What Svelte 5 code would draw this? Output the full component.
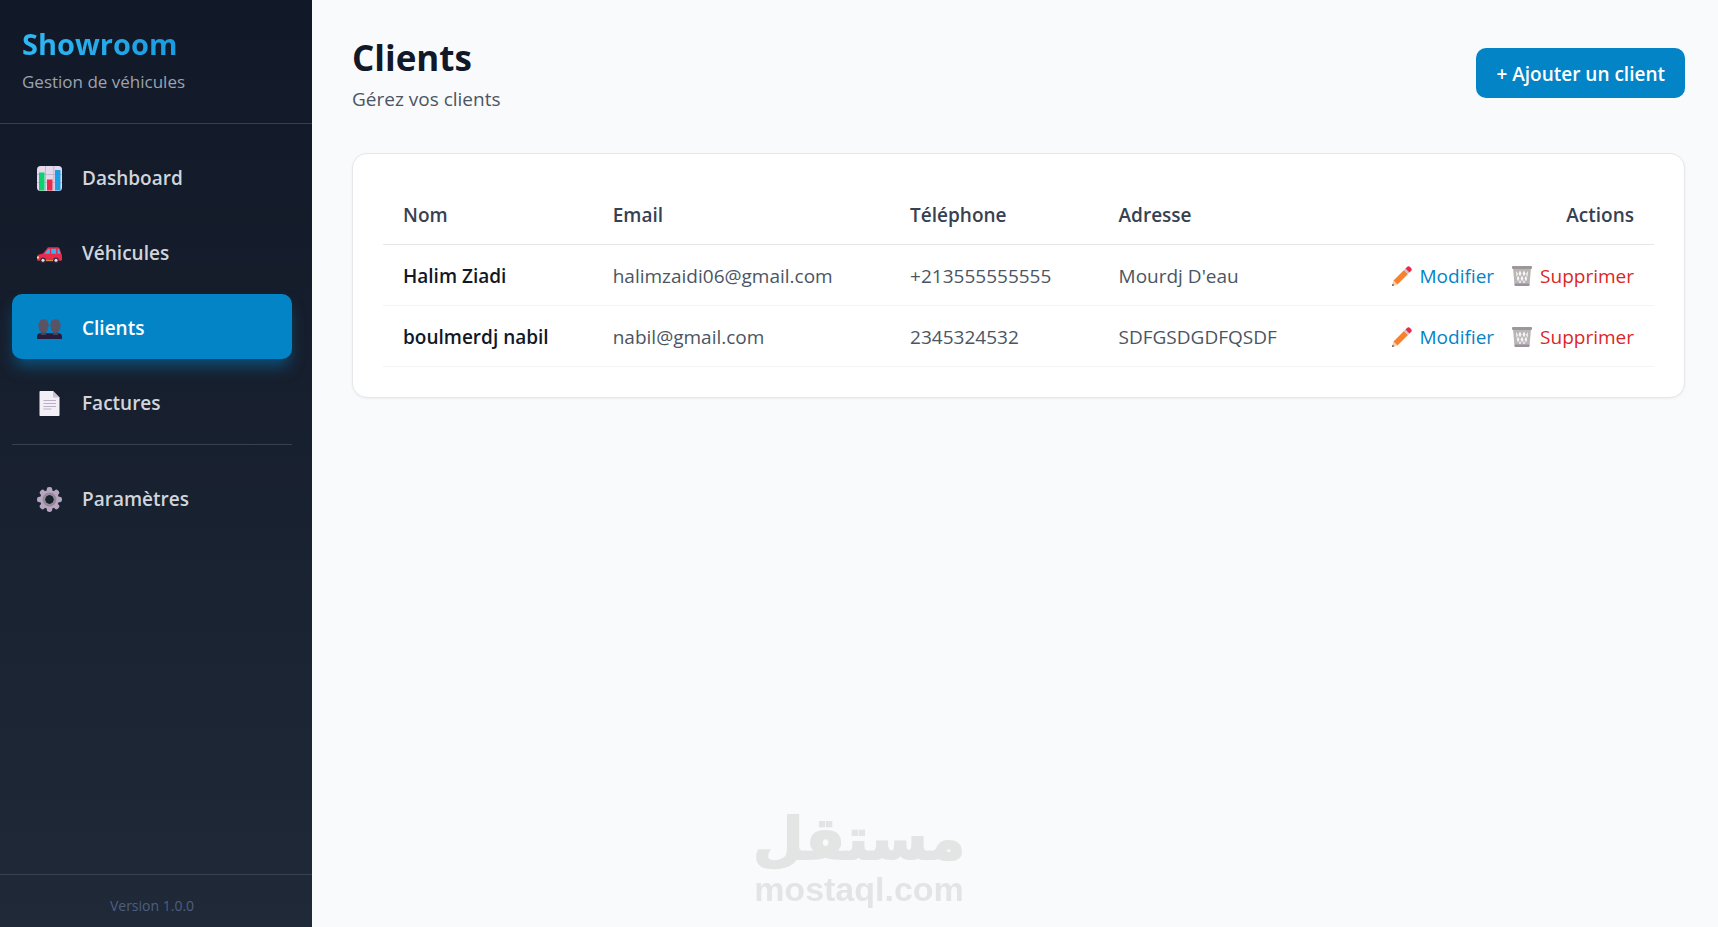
<script>
  // Liens principaux du menu
  const menu = [
    { id: 'dashboard', label: 'Dashboard' },
    { id: 'vehicules', label: 'Véhicules' },
    { id: 'clients', label: 'Clients' },
    { id: 'factures', label: 'Factures' }
  ];

  let page = $state('clients');

  let clients = $state([
    { id: 1, nom: 'Halim Ziadi', email: 'halimzaidi06@gmail.com', telephone: '+213555555555', adresse: "Mourdj D'eau" },
    { id: 2, nom: 'boulmerdj nabil', email: 'nabil@gmail.com', telephone: '2345324532', adresse: 'SDFGSDGDFQSDF' }
  ]);

  function supprimer(id) {
    clients = clients.filter((c) => c.id !== id);
  }
</script>

{#snippet icone(nom)}
  <svg class="icone" viewBox="0 0 25 25" aria-hidden="true">
    {#if nom === 'dashboard'}
      <rect width="25" height="25" rx="3.500" fill="#e4d8ea" />
      <path d="M0 8.500h25M0 16.500h25M8.500 0v25M16.800 0v25" stroke="#b9afc4" stroke-width="0.800" />
      <rect x="2" y="6.500" width="5.500" height="18" fill="#0bd16f" />
      <rect x="10" y="13.500" width="5.500" height="11" fill="#ea2a4b" />
      <rect x="18" y="4" width="5.500" height="20.500" fill="#1c9fe2" />
    {:else if nom === 'vehicules'}
      <path d="M0 16.500c0-2 1-3 3-3.300l3-.7 4-5C10.500 6.600 11 6.200 12 6.200h8.500c1 0 1.800.5 2.200 1.500l1.600 5c.5.700.7 1.300.7 2.300v3.500c0 .8-.5 1.300-1.300 1.300H1.300C.5 19.800 0 19.300 0 18.500z" fill="#ea2a4b" />
      <path d="M7.500 12.800l3.300-4.300c.4-.6.800-.8 1.500-.8h.5v5.100zM14.300 7.700h4.800v5.100h-4.800zM20.600 7.700h.4c.7 0 1 .3 1.200.9l1.300 4.200h-2.900z" fill="#35b5f0" />
      <path d="M0 15.500h2v2H0z" fill="#f7e0a0" />
      <path d="M9 19h7v1.200H9z" fill="#c98a4b" />
      <circle cx="6" cy="19.300" r="2.800" fill="#38283e" />
      <circle cx="19" cy="19.300" r="2.800" fill="#38283e" />
      <circle cx="6" cy="19.300" r="1.500" fill="#e8e0ec" />
      <circle cx="19" cy="19.300" r="1.500" fill="#e8e0ec" />
    {:else if nom === 'clients'}
      <path d="M0 23v-2.500c0-2 1.300-3.300 3.300-3.300h18.400c2 0 3.300 1.300 3.300 3.300V23z" fill="#281b3d" />
      <path d="M4 15h5v4H4zM16 15h5v4h-5z" fill="#484354" />
      <path d="M2 7.500C2 4.700 3.800 3.200 6.500 3.200s4.700 1.500 4.700 4.300l.8 2.500-.9.700c0 3.500-2 6.300-4.600 6.300S1.600 14 1.600 10.500L1 9zM23 7.500c0-2.800-1.800-4.300-4.500-4.300s-4.700 1.500-4.700 4.300L13 10l.9.700c0 3.500 2 6.300 4.600 6.300s4.900-3 4.900-6.500L24 9z" fill="#5a5363" />
    {:else if nom === 'factures'}
      <path d="M3.500 0H16l6.500 6.500V24c0 .6-.4 1-1 1h-18c-.6 0-1-.4-1-1V1c0-.6.4-1 1-1z" fill="#f3eff6" />
      <path d="M16 0v5.500c0 .6.400 1 1 1h5.500z" fill="#cdbfd6" />
      <path d="M6.500 9.500h12.500M6.500 12.500h12.500M6.500 15.500h12.500M6.500 18h8" stroke="#bcaec6" />
    {:else}
      <g fill="#b8a5c2">
        {#each [0, 45, 90, 135, 180, 225, 270, 315] as angle}
          <rect x="9.700" y="0" width="5.600" height="6" rx="2.400" transform="rotate({angle} 12.500 12.500)" />
        {/each}
      </g>
      <circle cx="12.500" cy="12.500" r="7" fill="none" stroke="#b8a5c2" stroke-width="5" />
      <circle cx="12.500" cy="12.500" r="5.700" fill="none" stroke="#928b96" stroke-width="2.500" />
    {/if}
  </svg>
{/snippet}

<div class="app">
  <!-- Barre latérale -->
  <aside class="sidebar">
    <div class="marque">
      <div class="logo">Showroom</div>
      <div class="slogan">Gestion de véhicules</div>
    </div>

    <nav>
      {#each menu as item}
        <a href="#{item.id}" class="lien" class:actif={page === item.id} onclick={() => (page = item.id)}>
          {@render icone(item.id)}
          {item.label}
        </a>
      {/each}
      <hr />
      <a href="#parametres" class="lien" class:actif={page === 'parametres'} onclick={() => (page = 'parametres')}>
        {@render icone('parametres')}
        Paramètres
      </a>
    </nav>

    <div class="version">Version 1.0.0</div>
  </aside>

  <!-- Contenu de la page -->
  <main>
    <header>
      <div>
        <h1>Clients</h1>
        <p>Gérez vos clients</p>
      </div>
      <button class="ajouter">+ Ajouter un client</button>
    </header>

    <section class="carte">
      <table>
        <thead>
          <tr>
            <th class="col-nom">Nom</th>
            <th class="col-email">Email</th>
            <th class="col-tel">Téléphone</th>
            <th>Adresse</th>
            <th class="droite">Actions</th>
          </tr>
        </thead>
        <tbody>
          {#each clients as client (client.id)}
            <tr>
              <td class="nom">{client.nom}</td>
              <td>{client.email}</td>
              <td>{client.telephone}</td>
              <td>{client.adresse}</td>
              <td>
                <div class="actions">
                  <button class="modifier">
                    <svg viewBox="0 0 20 20" aria-hidden="true">
                      <path d="M0 20l1.500-5.500 4 4z" fill="#f6cf9b" />
                      <path d="M0 20l.7-2.300 1.600 1.600z" fill="#43324a" />
                      <path d="M1.500 14.500L12 4l4 4L5.500 18.500z" fill="#f8812f" />
                      <path d="M12 4l2-2 4 4-2 2z" fill="#cbc4cf" />
                      <path d="M13.500 2.500l1.500-1.500c1-1 2.200-1 3.100 0l.9.900c1 1 1 2.200 0 3.100L17.500 6.500z" fill="#ea2a4b" />
                    </svg>
                    Modifier
                  </button>
                  <button class="supprimer" onclick={() => supprimer(client.id)}>
                    <svg viewBox="0 0 20 20" aria-hidden="true">
                      <path d="M1 2h18l-1.500 17h-15z" fill="#b9b6b5" />
                      <path d="M4 5l2 3-1.500 3zM8 4.500l1.500 3L8 10.500 6.500 7.500zM12 4.500l1.500 3-1.500 3-1.500-3zM16 5l-2 3 1.500 3zM6 9.500l1.500 3L6 15.500l-1.200-3zM10 9.500l1.500 3-1.500 3-1.500-3zM14 9.500l1.200 3-1.200 3-1.500-3zM8 14l1 2-1 1.500-1-1.500zM12 14l1 2-1 1.500-1-1.500z" fill="#f7f5f7" />
                      <rect y="0" width="20" height="3" rx="1" fill="#9c9897" />
                      <rect x="2.500" y="17.500" width="15" height="2.500" rx="1" fill="#9b8fa0" />
                    </svg>
                    Supprimer
                  </button>
                </div>
              </td>
            </tr>
          {/each}
        </tbody>
      </table>
    </section>
  </main>

  <!-- Filigrane posé au-dessus de la page -->
  <div class="filigrane">
    <span class="arabe" lang="ar" dir="rtl">مستقل</span>
    <span class="domaine">mostaql.com</span>
  </div>
</div>

<style>
  :global(body) {
    margin: 0;
    background: #f9fafc;
  }

  .app {
    display: flex;
    min-height: 100vh;
    font-family: 'Segoe UI', 'Open Sans', 'Noto Sans', sans-serif;
    font-size: 19px;
    line-height: 30px;
    color: #4b5563;
  }

  .sidebar {
    display: flex;
    flex-direction: column;
    flex: none;
    width: 312px;
    background: linear-gradient(180deg, #111827, #1f2937);
  }

  .marque {
    padding: 24px 22px 29px;
    border-bottom: 1px solid #374151;
  }

  .logo {
    width: fit-content;
    margin-bottom: 5px;
    font-size: 29px;
    line-height: 40px;
    font-weight: 700;
    background: linear-gradient(90deg, #2fb9f5, #1a9be0);
    background-clip: text;
    color: transparent;
  }

  .slogan {
    font-size: 17px;
    line-height: 25px;
    color: #9ca3af;
  }

  nav {
    display: flex;
    flex-direction: column;
    flex: 1;
    gap: 10px;
    padding: 20px 20px 20px 12px;
  }

  .lien {
    display: flex;
    align-items: center;
    gap: 20px;
    padding: 19px 25px 16px;
    border-radius: 10px;
    font-weight: 600;
    color: #d1d5db;
    text-decoration: none;
  }

  .lien.actif {
    background: #0284c7;
    color: #fff;
    box-shadow: 0 10px 15px -3px rgba(2, 132, 199, 0.5);
  }

  .icone {
    width: 25px;
    height: 25px;
  }

  hr {
    width: 100%;
    height: 1px;
    margin: 0 0 10px;
    border: none;
    background: #374151;
  }

  .version {
    padding: 19px 28px 9px 20px;
    border-top: 1px solid #374151;
    font-size: 14px;
    line-height: 24px;
    text-align: center;
    color: #4f5f80;
  }

  main {
    flex: 1;
    min-width: 0;
    padding: 32px 33px 32px 40px;
  }

  header {
    display: flex;
    justify-content: space-between;
    align-items: center;
    margin-bottom: 39px;
  }

  h1 {
    margin: 0 0 1px;
    font-size: 35px;
    line-height: 51px;
    font-weight: 700;
    color: #111827;
  }

  p {
    margin: 0;
  }

  button {
    border: none;
    font: inherit;
    cursor: pointer;
  }

  .ajouter {
    padding: 11px 20px 9px;
    border-radius: 10px;
    font-weight: 600;
    background: #0284c7;
    color: #fff;
  }

  .carte {
    padding: 30px;
    border: 1px solid #e5e7eb;
    border-radius: 15px;
    background: #fff;
    box-shadow: 0 1px 3px rgba(0, 0, 0, 0.05);
  }

  table {
    width: 100%;
    border-collapse: separate;
    border-spacing: 0;
  }

  th,
  td {
    padding: 16px 20px 14px;
    text-align: left;
    font-weight: 400;
    border-bottom: 1px solid #f3f4f6;
  }

  th {
    font-weight: 600;
    color: #374151;
    border-bottom-color: #e5e7eb;
  }

  .col-nom {
    width: 16.5%;
  }

  .col-email {
    width: 23.4%;
  }

  .col-tel {
    width: 16.4%;
  }

  .droite {
    text-align: right;
  }

  .nom {
    font-weight: 600;
    color: #111827;
  }

  .actions {
    display: flex;
    justify-content: flex-end;
    gap: 18px;
  }

  .actions button {
    display: flex;
    align-items: center;
    gap: 8px;
    padding: 0;
    background: none;
  }

  .actions svg {
    width: 20px;
    height: 20px;
  }

  .modifier {
    color: #0284c7;
  }

  .supprimer {
    color: #dc2626;
  }

  .filigrane {
    position: fixed;
    bottom: 20px;
    left: 50%;
    transform: translateX(-50%);
    display: flex;
    flex-direction: column;
    align-items: center;
    color: #e3e5e5;
    pointer-events: none;
  }

  .arabe {
    font-family: 'DejaVu Sans', sans-serif;
    font-size: 58px;
    line-height: 64px;
    font-weight: 700;
    -webkit-text-stroke: 2px #e3e5e5;
  }

  .domaine {
    font-family: 'Liberation Sans', Arial, sans-serif;
    font-size: 34px;
    line-height: 36px;
    font-weight: 700;
  }
</style>
